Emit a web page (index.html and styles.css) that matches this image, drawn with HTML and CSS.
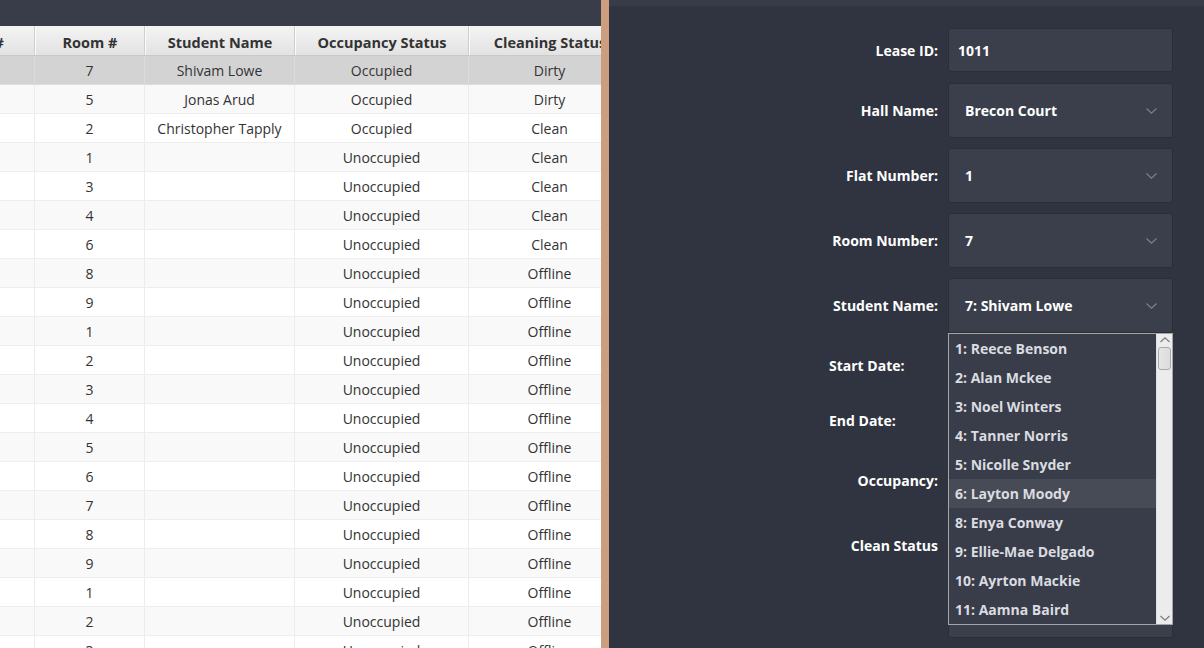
FILE: index.html
```html
<!DOCTYPE html>
<html>
<head>
<meta charset="utf-8">
<link rel="stylesheet" href="styles.css">
</head>
<body>
<div class="app">
  <section class="left">
    <div class="topbar"></div>
    <div class="table-wrap">
      <div class="table">
        <div class="row head">
          <div class="c c0">Flat #</div><div class="c c1">Room #</div><div class="c c2">Student Name</div><div class="c c3">Occupancy Status</div><div class="c c4">Cleaning Status</div>
        </div>
        <div class="row sel"><div class="c c0"></div><div class="c c1">7</div><div class="c c2">Shivam Lowe</div><div class="c c3">Occupied</div><div class="c c4">Dirty</div></div>
        <div class="row"><div class="c c0"></div><div class="c c1">5</div><div class="c c2">Jonas Arud</div><div class="c c3">Occupied</div><div class="c c4">Dirty</div></div>
        <div class="row"><div class="c c0"></div><div class="c c1">2</div><div class="c c2">Christopher Tapply</div><div class="c c3">Occupied</div><div class="c c4">Clean</div></div>
        <div class="row"><div class="c c0"></div><div class="c c1">1</div><div class="c c2"></div><div class="c c3">Unoccupied</div><div class="c c4">Clean</div></div>
        <div class="row"><div class="c c0"></div><div class="c c1">3</div><div class="c c2"></div><div class="c c3">Unoccupied</div><div class="c c4">Clean</div></div>
        <div class="row"><div class="c c0"></div><div class="c c1">4</div><div class="c c2"></div><div class="c c3">Unoccupied</div><div class="c c4">Clean</div></div>
        <div class="row"><div class="c c0"></div><div class="c c1">6</div><div class="c c2"></div><div class="c c3">Unoccupied</div><div class="c c4">Clean</div></div>
        <div class="row"><div class="c c0"></div><div class="c c1">8</div><div class="c c2"></div><div class="c c3">Unoccupied</div><div class="c c4">Offline</div></div>
        <div class="row"><div class="c c0"></div><div class="c c1">9</div><div class="c c2"></div><div class="c c3">Unoccupied</div><div class="c c4">Offline</div></div>
        <div class="row"><div class="c c0"></div><div class="c c1">1</div><div class="c c2"></div><div class="c c3">Unoccupied</div><div class="c c4">Offline</div></div>
        <div class="row"><div class="c c0"></div><div class="c c1">2</div><div class="c c2"></div><div class="c c3">Unoccupied</div><div class="c c4">Offline</div></div>
        <div class="row"><div class="c c0"></div><div class="c c1">3</div><div class="c c2"></div><div class="c c3">Unoccupied</div><div class="c c4">Offline</div></div>
        <div class="row"><div class="c c0"></div><div class="c c1">4</div><div class="c c2"></div><div class="c c3">Unoccupied</div><div class="c c4">Offline</div></div>
        <div class="row"><div class="c c0"></div><div class="c c1">5</div><div class="c c2"></div><div class="c c3">Unoccupied</div><div class="c c4">Offline</div></div>
        <div class="row"><div class="c c0"></div><div class="c c1">6</div><div class="c c2"></div><div class="c c3">Unoccupied</div><div class="c c4">Offline</div></div>
        <div class="row"><div class="c c0"></div><div class="c c1">7</div><div class="c c2"></div><div class="c c3">Unoccupied</div><div class="c c4">Offline</div></div>
        <div class="row"><div class="c c0"></div><div class="c c1">8</div><div class="c c2"></div><div class="c c3">Unoccupied</div><div class="c c4">Offline</div></div>
        <div class="row"><div class="c c0"></div><div class="c c1">9</div><div class="c c2"></div><div class="c c3">Unoccupied</div><div class="c c4">Offline</div></div>
        <div class="row"><div class="c c0"></div><div class="c c1">1</div><div class="c c2"></div><div class="c c3">Unoccupied</div><div class="c c4">Offline</div></div>
        <div class="row"><div class="c c0"></div><div class="c c1">2</div><div class="c c2"></div><div class="c c3">Unoccupied</div><div class="c c4">Offline</div></div>
        <div class="row"><div class="c c0"></div><div class="c c1">3</div><div class="c c2"></div><div class="c c3">Unoccupied</div><div class="c c4">Offline</div></div>
      </div>
    </div>
  </section>
  <div class="divider"></div>
  <section class="right">
    <div class="strip"></div>
    <div class="form">
      <div class="lbl">Lease ID:</div>
      <div class="field text">1011</div>

      <div class="lbl">Hall Name:</div>
      <div class="field combo"><span>Brecon Court</span><svg class="chev" width="11" height="6" viewBox="0 0 11 6"><path d="M0.5 0.5 L5.5 5.2 L10.5 0.5" fill="none" stroke="#7e828b" stroke-width="1.1"/></svg></div>

      <div class="lbl">Flat Number:</div>
      <div class="field combo"><span>1</span><svg class="chev" width="11" height="6" viewBox="0 0 11 6"><path d="M0.5 0.5 L5.5 5.2 L10.5 0.5" fill="none" stroke="#7e828b" stroke-width="1.1"/></svg></div>

      <div class="lbl">Room Number:</div>
      <div class="field combo"><span>7</span><svg class="chev" width="11" height="6" viewBox="0 0 11 6"><path d="M0.5 0.5 L5.5 5.2 L10.5 0.5" fill="none" stroke="#7e828b" stroke-width="1.1"/></svg></div>

      <div class="lbl">Student Name:</div>
      <div class="field combo open"><span>7: Shivam Lowe</span><svg class="chev" width="11" height="6" viewBox="0 0 11 6"><path d="M0.5 0.5 L5.5 5.2 L10.5 0.5" fill="none" stroke="#7e828b" stroke-width="1.1"/></svg>
        <div class="popup">
          <ul class="list">
            <li>1: Reece Benson</li>
            <li>2: Alan Mckee</li>
            <li>3: Noel Winters</li>
            <li>4: Tanner Norris</li>
            <li>5: Nicolle Snyder</li>
            <li class="hover">6: Layton Moody</li>
            <li>8: Enya Conway</li>
            <li>9: Ellie-Mae Delgado</li>
            <li>10: Ayrton Mackie</li>
            <li>11: Aamna Baird</li>
          </ul>
          <div class="sbar">
            <svg class="arr" width="12" height="8" viewBox="0 0 12 8"><path d="M1.5 6 L6 1.8 L10.5 6" fill="none" stroke="#7a7a7a" stroke-width="1.1"/></svg>
            <div class="thumb"></div>
            <div class="track"></div>
            <svg class="arr" width="12" height="8" viewBox="0 0 12 8"><path d="M1.5 2 L6 6.2 L10.5 2" fill="none" stroke="#7a7a7a" stroke-width="1.1"/></svg>
          </div>
        </div>
      </div>

      <div class="lbl start">Start Date:</div>
      <div class="empty"></div>

      <div class="lbl start">End Date:</div>
      <div class="empty"></div>

      <div class="lbl">Occupancy:</div>
      <div class="empty"></div>

      <div class="lbl">Clean Status</div>
      <div class="empty"></div>

      <div class="lbl"></div>
      <div class="field combo"></div>
    </div>
  </section>
</div>
</body>
</html>
```

FILE: styles.css
```css
* { box-sizing: border-box; }
html, body { margin: 0; padding: 0; }
body {
  width: 1204px;
  height: 648px;
  overflow: hidden;
  font-family: "Open Sans", "Noto Sans", "DejaVu Sans", sans-serif;
  font-size: 14px;
  background: #2f3440;
}
.app {
  display: flex;
  height: 648px;
}
.left {
  width: 601px;
  flex: none;
  display: flex;
  flex-direction: column;
  background: #ffffff;
  overflow: hidden;
}
.topbar {
  height: 26px;
  flex: none;
  background: #383d49;
}
.table-wrap {
  flex: 1;
  overflow: hidden;
}
.table {
  margin-left: -68px;
  width: 780px;
}
.row {
  display: flex;
  height: 29px;
  border-bottom: 1px solid #eeeeee;
  color: #333333;
}
.row:nth-child(odd) { background: #f9f9f9; }
.row:nth-child(even) { background: #ffffff; }
.row.sel { background: #d3d3d3; border-bottom-color: #dddddd; }
.row.head {
  height: 30px;
  padding-top: 3px;
  background: linear-gradient(#f4f4f4, #e2e2e2);
  border-bottom: 1px solid #c9c9c9;
  font-weight: 700;
  font-size: 14.5px;
  color: #333333;
}
.c {
  flex: none;
  display: flex;
  align-items: center;
  justify-content: center;
  white-space: nowrap;
  overflow: hidden;
  border-right: 1px solid #ececec;
}
.row.sel .c { border-right-color: #dcdcdc; }
.row.head .c {
  margin-top: -3px;
  padding-top: 3px;
  border-right: 1px solid #cfcfcf;
  border-left: 1px solid #fbfbfb;
}
.c0 { width: 103px; }
.c1 { width: 110px; }
.c2 { width: 150px; }
.c3 { width: 174px; }
.c4 { width: 162px; }

.divider {
  width: 8px;
  flex: none;
  background: #cd9d80;
}
.right {
  flex: 1;
  display: flex;
  flex-direction: column;
  background: #2f3440;
}
.strip {
  height: 6px;
  background: #373c48;
  flex: none;
}
.form {
  display: grid;
  grid-template-columns: 109px 225px;
  grid-template-rows: 45px 55px 55px 55px 55px 45px 45px 55px 55px 55px;
  column-gap: 10px;
  row-gap: 10px;
  padding-top: 22px;
  padding-left: 220px;
  color: #ffffff;
  font-weight: 700;
}
.lbl {
  display: flex;
  align-items: center;
  justify-content: flex-end;
  white-space: nowrap;
}
.lbl.start { justify-content: flex-start; }
.field {
  position: relative;
  background: #3a3f4b;
  border: 1px solid #2a2e37;
  border-radius: 3px;
  display: flex;
  align-items: center;
  color: #ffffff;
}
.field.text {
  height: 44px;
  align-self: start;
  padding-left: 9px;
}
.field.combo {
  padding-left: 16px;
  padding-right: 15px;
  justify-content: space-between;
}
.chev { flex: none; }
.popup {
  position: absolute;
  top: 54px;
  left: -1px;
  width: 225px;
  height: 292px;
  border: 1px solid #a6a6a6;
  background: #393d49;
  display: flex;
  z-index: 5;
}
.list {
  list-style: none;
  margin: 0;
  padding: 0;
  flex: 1;
}
.list li {
  height: 29px;
  display: flex;
  align-items: center;
  padding-left: 6px;
  color: #dadce0;
  font-weight: 700;
}
.list li.hover { background: #474b56; }
.sbar {
  width: 16px;
  flex: none;
  background: #ececec;
  border-left: 1px solid #e0e0e0;
  display: flex;
  flex-direction: column;
  align-items: center;
}
.arr { flex: none; margin-top: 2px; }
.thumb {
  width: 13px;
  height: 23px;
  margin-top: 3px;
  border: 1px solid #a9a9a9;
  border-radius: 3px;
  background: linear-gradient(90deg, #e6e6e6, #dcdcdc);
}
.track { flex: 1; }
.sbar .arr:last-child { margin-bottom: 2px; }
.empty { }
```
